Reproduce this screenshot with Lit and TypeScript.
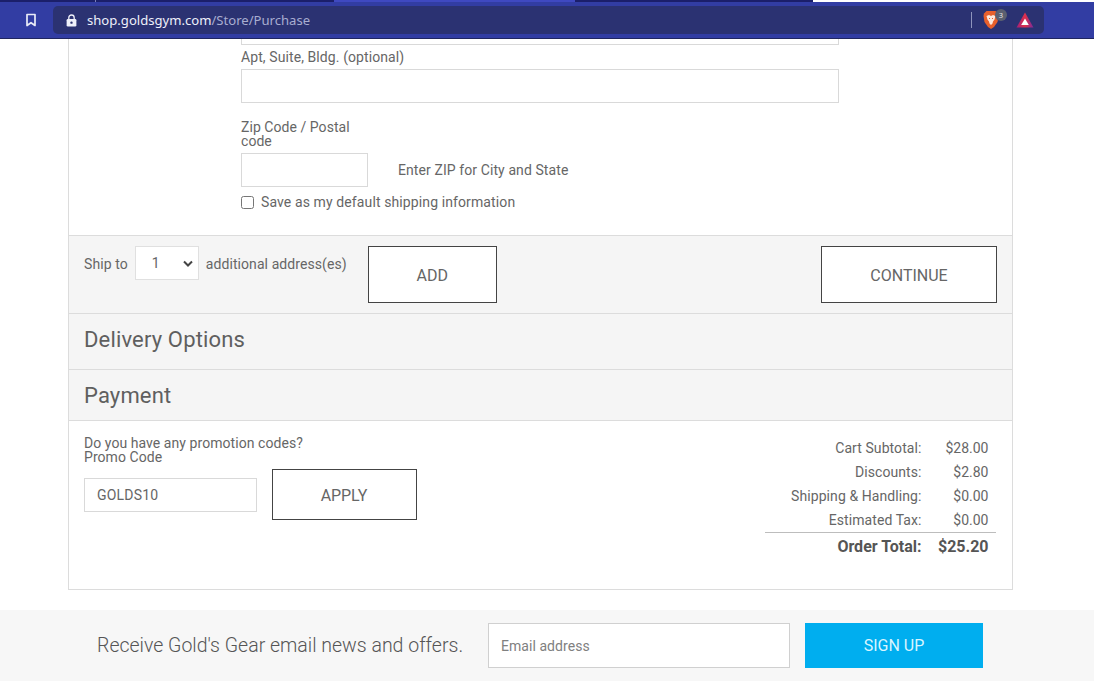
import { LitElement, html, css } from "lit";
import { customElement } from "lit/decorators.js";

@customElement("app-root")
export class AppRoot extends LitElement {
  static styles = css`
    :host { display: block; width: 1094px; height: 687px; overflow: hidden; background: #fff; font-family: Roboto, "Liberation Sans", sans-serif; font-size: 14px; color: #666; }
    * { box-sizing: border-box; }
    .chrome { height: 39px; background: #323da3; border-bottom: 1px solid #20265f; position: relative; display: flex; align-items: flex-start; padding: 6px 50px 0 23px; }
    .tabs { position: absolute; left: 0; top: 0; height: 2px; width: 100%; display: flex; }
    .tabs i { display: block; height: 2px; }
    .bookmark { width: 16px; height: 28px; display: flex; align-items: center; justify-content: center; margin-right: 14px; flex: none; }
    .omni { flex: 1; height: 28px; background: #2b3272; border-radius: 5px; display: flex; align-items: center; padding: 0 10px 0 13px; }
    .url { margin-left: 10px; font-family: "Noto Sans", sans-serif; font-size: 13.1px; color: #eef0fa; white-space: nowrap; flex: 1; }
    .url span { color: #a8add0; }
    .sep { width: 1px; height: 16px; background: #8e94bd; margin-right: 11px; }
    .brave { position: relative; width: 24px; height: 20px; margin-right: 9px; }
    .badge { position: absolute; left: 12px; top: -1px; width: 12px; height: 12px; border-radius: 50%; background: #5b6070; color: #e8e8e8; font-size: 7.5px; line-height: 12px; text-align: center; font-family: "Noto Sans", sans-serif; }
    .card { width: 945px; height: 551px; margin-left: 68px; border: 1px solid #dcdcdc; border-top: 0; display: flex; flex-direction: column; }
    .form { height: 196px; padding-left: 172px; display: flex; flex-direction: column; align-items: flex-start; }
    .field { display: block; width: 598px; height: 34px; border: 1px solid #d9d9d9; background: #fff; }
    .clip { height: 6px; border-top: 0; }
    .lab { line-height: 14px; letter-spacing: .09px; margin-top: 5px; margin-bottom: 5px; }
    .zip-lab { width: 127px; line-height: 14px; letter-spacing: .05px; margin-top: 17px; margin-bottom: 5px; }
    .zip-row { display: flex; align-items: center; gap: 30px; height: 34px; letter-spacing: .09px; }
    .zip { width: 127px; height: 34px; border: 1px solid #d9d9d9; }
    .save { display: flex; align-items: center; gap: 7px; margin-top: 7px; height: 16px; letter-spacing: .11px; }
    .save input { margin: 0; width: 13px; height: 13px; }
    .ship { height: 79px; border-top: 1px solid #dcdcdc; border-bottom: 1px solid #dcdcdc; background: #f5f5f5; display: flex; align-items: flex-start; padding: 10px 15px 0; }
    .ship-txt { margin-top: 10px; line-height: 16px; letter-spacing: .08px; }
    .sel { width: 64px; height: 34px; margin: 0 7px; border: 1px solid #e0e0e0; background: #fff; display: flex; align-items: center; justify-content: space-between; padding: 0 5px 0 16px; color: #666; }
    .btn { background: #fff; border: 1px solid #444; display: flex; align-items: center; justify-content: center; font-size: 16px; color: #666; padding-top: 1px; }
    .add { width: 129px; height: 57px; margin-left: 21px; }
    .cont { width: 176px; height: 57px; margin-left: auto; }
    .acc { background: #f5f5f5; border-bottom: 1px solid #dcdcdc; padding-left: 15px; font-size: 22px; letter-spacing: .15px; color: #5f5f5f; display: flex; align-items: center; }
    .h1 { height: 56px; padding-bottom: 4px; }
    .h2 { height: 51px; }
    .pay { flex: 1; display: flex; justify-content: space-between; padding: 15px 16px 0 15px; }
    .promo-l { line-height: 14px; letter-spacing: .06px; }
    .promo-row { display: flex; align-items: flex-start; gap: 15px; margin-top: 5px; }
    .code { width: 173px; height: 34px; border: 1px solid #d9d9d9; margin-top: 9px; padding-left: 12px; display: flex; align-items: center; letter-spacing: .2px; }
    .apply { width: 145px; height: 51px; letter-spacing: -.1px; padding-right: 1px; }
    .totals { width: 231px; }
    .tr { display: flex; justify-content: flex-end; height: 24px; align-items: center; padding-right: 7.5px; letter-spacing: .08px; }
    .v { width: 67px; text-align: right; letter-spacing: 0; }
    .line { border-top: 1px solid #bdbdbd; }
    .tot { font-weight: 700; font-size: 16px; height: 27px; color: #555; letter-spacing: 0; }
    .foot { margin-top: 20px; height: 71px; background: #f7f7f7; display: flex; align-items: flex-start; padding: 13px 0 0 97px; }
    .foot-t { font-size: 19.5px; line-height: 45px; white-space: nowrap; width: 391px; font-weight: 300; color: #555; }
    .email { width: 302px; height: 45px; border: 1px solid #d0d0d0; background: #fff; padding-left: 12px; display: flex; align-items: center; color: #808080; letter-spacing: .05px; }
    .sign { width: 178px; height: 45px; margin-left: 15px; background: #00aeef; color: #d9f5ff; font-size: 16px; display: flex; align-items: center; justify-content: center; }
  `;

  render() {
    return html`
      <div class="chrome">
        <div class="tabs">
          <i style="width:95px;background:#1b1f6a"></i><i style="width:1px;background:#7a80b8"></i><i style="width:238px;background:#1b1f6a"></i><i style="width:241px;background:#3f49c0"></i><i style="width:238px;background:#1b1f6a"></i><i style="width:281px;background:#fff"></i>
        </div>
        <div class="bookmark">
          <svg width="12" height="14" viewBox="0 0 12 14"><path d="M2 1.500h8v11L6 9.700 2 12.500z" fill="none" stroke="#e9ebf7" stroke-width="1.700" stroke-linejoin="round"/></svg>
        </div>
        <div class="omni">
          <svg width="11" height="13" viewBox="0 0 10 12"><path d="M2.500 5V3.400a2.500 2.500 0 0 1 5 0V5" fill="none" stroke="#eef0fa" stroke-width="1.200"/><rect x=".5" y="4.500" width="9" height="7" rx="1.200" fill="#eef0fa"/><circle cx="5" cy="8" r="1.100" fill="#2b3272"/></svg>
          <div class="url">shop.goldsgym.com<span>/Store/Purchase</span></div>
          <div class="sep"></div>
          <div class="brave">
            <svg width="16" height="20" viewBox="0 0 16 20"><path d="M3.500 1h9L15 3.500 15.500 6l-1 6-3.500 5-3 2-3-2-3.500-5-1-6L1 3.500z" fill="#e8602c"/><path d="M3.500 6 6 5l2 1 2-1 2.500 1-1 3.500-1.500 2-.5 2L8 15l-1.500-1.500-.5-2-1.500-2z" fill="#fbe9df"/><path d="M6 8.500h1M9 8.500h1" stroke="#e8602c" stroke-width="1"/></svg>
            <div class="badge">3</div>
          </div>
          <svg width="18" height="16" viewBox="0 0 18 16"><defs><linearGradient id="bat" x1="0" x2="1" y1="0" y2="0"><stop offset="0" stop-color="#9e1f7a"/><stop offset=".5" stop-color="#e0304a"/><stop offset="1" stop-color="#7a2a9a"/></linearGradient></defs><path d="M9 .5 17.500 15.500H.5z" fill="url(#bat)"/><path d="M9 6.500l3.800 6.500H5.200z" fill="#fff"/></svg>
        </div>
      </div>
      <div class="card">
        <div class="form">
          <div class="field clip"></div>
          <div class="lab">Apt, Suite, Bldg. (optional)</div>
          <div class="field"></div>
          <div class="zip-lab">Zip Code / Postal code</div>
          <div class="zip-row"><div class="zip"></div><div>Enter ZIP for City and State</div></div>
          <label class="save"><input type="checkbox" />Save as my default shipping information</label>
        </div>
        <div class="ship">
          <div class="ship-txt">Ship to</div>
          <div class="sel">1
            <svg width="10" height="7" viewBox="0 0 10 7"><path d="M1 1.500 5 5.500 9 1.500" fill="none" stroke="#444" stroke-width="2"/></svg>
          </div>
          <div class="ship-txt">additional address(es)</div>
          <div class="btn add">ADD</div>
          <div class="btn cont">CONTINUE</div>
        </div>
        <div class="acc h1">Delivery Options</div>
        <div class="acc h2">Payment</div>
        <div class="pay">
          <div>
            <div class="promo-l">Do you have any promotion codes?<br />Promo Code</div>
            <div class="promo-row"><div class="code">GOLDS10</div><div class="btn apply">APPLY</div></div>
          </div>
          <div class="totals">
            <div class="tr"><span>Cart Subtotal:</span><span class="v">$28.00</span></div>
            <div class="tr"><span>Discounts:</span><span class="v">$2.80</span></div>
            <div class="tr"><span>Shipping &amp; Handling:</span><span class="v">$0.00</span></div>
            <div class="tr"><span>Estimated Tax:</span><span class="v">$0.00</span></div>
            <div class="tr tot line"><span>Order Total:</span><span class="v">$25.20</span></div>
          </div>
        </div>
      </div>
      <div class="foot">
        <div class="foot-t">Receive Gold's Gear email news and offers.</div>
        <div class="email">Email address</div>
        <div class="sign">SIGN UP</div>
      </div>
    `;
  }
}
